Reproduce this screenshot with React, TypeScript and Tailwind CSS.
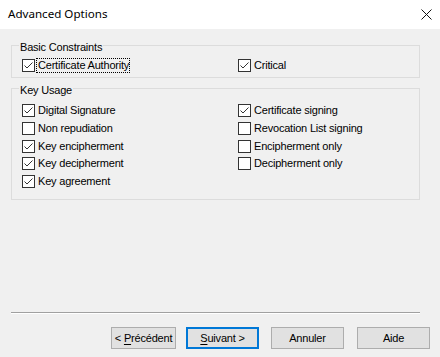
import React from "react";

const Check = ({ checked }: { checked: boolean }) => (
  <svg width="13" height="13" viewBox="0 0 13 13" className="shrink-0 block">
    <rect x="0.5" y="0.5" width="12" height="12" fill="#ffffff" stroke="#333333" />
    {checked && (
      <polyline points="2.5,6.5 5,9 10.5,3.5" fill="none" stroke="#333333" strokeWidth="1" />
    )}
  </svg>
);

const Row = ({ label, checked, focus = false }: { label: string; checked: boolean; focus?: boolean }) => (
  <div className="flex items-center h-[15px]">
    <Check checked={checked} />
    <span
      className={
        focus
          ? "ml-[1px] border border-dotted border-black pl-[1px] leading-[13px] whitespace-nowrap"
          : "ml-[1px] border border-transparent pl-[1px] leading-[13px] whitespace-nowrap"
      }
    >
      {label}
    </span>
  </div>
);

const Group = ({ title, children, className }: { title: string; children: React.ReactNode; className: string }) => (
  <div className={"relative border border-[#dcdcdc] " + className}>
    <span className="absolute left-[7px] top-[-5px] bg-[#f0f0f0] px-[1px] leading-[13px] whitespace-nowrap">
      {title}
    </span>
    {children}
  </div>
);

export default function App() {
  return (
    <div
      className="w-[440px] h-[357px] bg-[#f0f0f0] text-[11px] tracking-[-0.2px] text-black overflow-hidden flex flex-col"
      style={{ fontFamily: '"Liberation Sans", Arial, sans-serif' }}
    >
      <div className="h-[29px] bg-white flex items-center justify-between pl-[8px] pr-[8px] shrink-0">
        <span
          className="text-[11.6px] leading-[16px] pb-[1px] tracking-normal text-black"
          style={{ fontFamily: '"Noto Sans", "Open Sans", sans-serif' }}
        >
          Advanced Options
        </span>
        <svg width="11" height="11" viewBox="0 0 11 11" className="block">
          <line x1="0.5" y1="0.5" x2="10.5" y2="10.5" stroke="#111" strokeWidth="1" />
          <line x1="10.5" y1="0.5" x2="0.5" y2="10.5" stroke="#111" strokeWidth="1" />
        </svg>
      </div>

      <div className="flex flex-col px-[11px] pt-[16px] w-[431px]">
        <Group title="Basic Constraints" className="pt-[12px] pb-[4px] pl-[10px]">
          <div className="grid grid-cols-[216px_1fr]">
            <Row label="Certificate Authority" checked focus />
            <Row label="Critical" checked />
          </div>
        </Group>

        <Group title="Key Usage" className="mt-[10px] pt-[14px] pb-[10px] pl-[10px]">
          <div className="grid grid-cols-[216px_1fr]">
            <div className="flex flex-col">
              <Row label="Digital Signature" checked />
              <div className="mt-[3px]"><Row label="Non repudiation" checked={false} /></div>
              <div className="mt-[3px]"><Row label="Key encipherment" checked /></div>
              <div className="mt-[2px]"><Row label="Key decipherment" checked /></div>
              <div className="mt-[3px]"><Row label="Key agreement" checked /></div>
            </div>
            <div className="flex flex-col">
              <Row label="Certificate signing" checked />
              <div className="mt-[3px]"><Row label="Revocation List signing" checked={false} /></div>
              <div className="mt-[3px]"><Row label="Encipherment only" checked={false} /></div>
              <div className="mt-[2px]"><Row label="Decipherment only" checked={false} /></div>
            </div>
          </div>
        </Group>

        <div className="mt-[112px] h-[1px] bg-[#a0a0a0]" />
        <div className="h-[1px] bg-white" />
      </div>

      <div className="flex justify-end pr-[10px] mt-[13px]">
        <button className="w-[65px] h-[22px] bg-[#e1e1e1] border border-[#adadad] flex items-center justify-center leading-[13px]">
          &lt; <span className="underline underline-offset-[2px] ml-[3px]">P</span>récédent
        </button>
        <button className="ml-[10px] w-[73px] h-[22px] bg-[#e1e1e1] border-2 border-[#0078d7] flex items-center justify-center leading-[13px]">
          <span className="underline underline-offset-[2px]">S</span>uivant &gt;
        </button>
        <button className="ml-[12px] w-[73px] h-[22px] bg-[#e1e1e1] border border-[#adadad] flex items-center justify-center leading-[13px]">
          Annuler
        </button>
        <button className="ml-[13px] w-[73px] h-[22px] bg-[#e1e1e1] border border-[#adadad] flex items-center justify-center leading-[13px]">
          Aide
        </button>
      </div>
    </div>
  );
}
